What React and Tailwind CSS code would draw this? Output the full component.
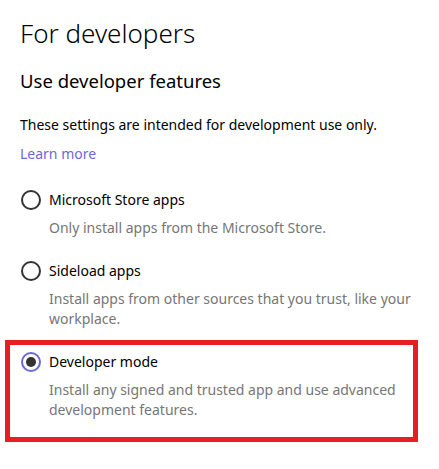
export default function App() {
  const Radio = ({ checked }) => (
    <span
      className={
        "flex h-[20px] w-[20px] shrink-0 items-center justify-center rounded-full border-2 " +
        (checked ? "border-[#6b69d6]" : "border-[#333333]")
      }
    >
      {checked && <span className="h-[10px] w-[10px] rounded-full bg-[#333333]" />}
    </span>
  );

  const Option = ({ label, desc, checked, className = "" }) => (
    <div className={"ml-[1px] " + className}>
      <div className="flex items-center gap-[8px] text-[14px] leading-[20px] text-black">
        <Radio checked={checked} />
        <span>{label}</span>
      </div>
      <p className="mt-[8px] ml-[28px] text-[14px] leading-[20px] text-[#767676]">{desc}</p>
    </div>
  );

  return (
    <div className="h-[469px] w-[439px] overflow-hidden bg-white pl-[20px] pt-[17px] font-['Noto_Sans',sans-serif]">
      <h1 className="text-[26px] font-light leading-[32px] text-black">For developers</h1>
      <h2 className="mt-[19px] text-[18.5px] font-normal leading-[26px] text-black">Use developer features</h2>
      <p className="mt-[21px] text-[14px] leading-[20px] text-black">
        These settings are intended for development use only.
      </p>
      <a className="mt-[9px] block text-[14px] leading-[20px] text-[#6b69d6]">Learn more</a>

      <Option className="mt-[26px]" label="Microsoft Store apps" desc="Only install apps from the Microsoft Store." />
      <Option
        className="mt-[23px]"
        label="Sideload apps"
        desc="Install apps from other sources that you trust, like your workplace."
      />
      <div className="-ml-[15px] mt-[11px] w-[413px] border-[5px] border-[#e81e25] pb-[17px] pl-[10px] pt-[7px] pr-[4px]">
        <Option
          checked
          label="Developer mode"
          desc="Install any signed and trusted app and use advanced development features."
        />
      </div>
    </div>
  );
}
